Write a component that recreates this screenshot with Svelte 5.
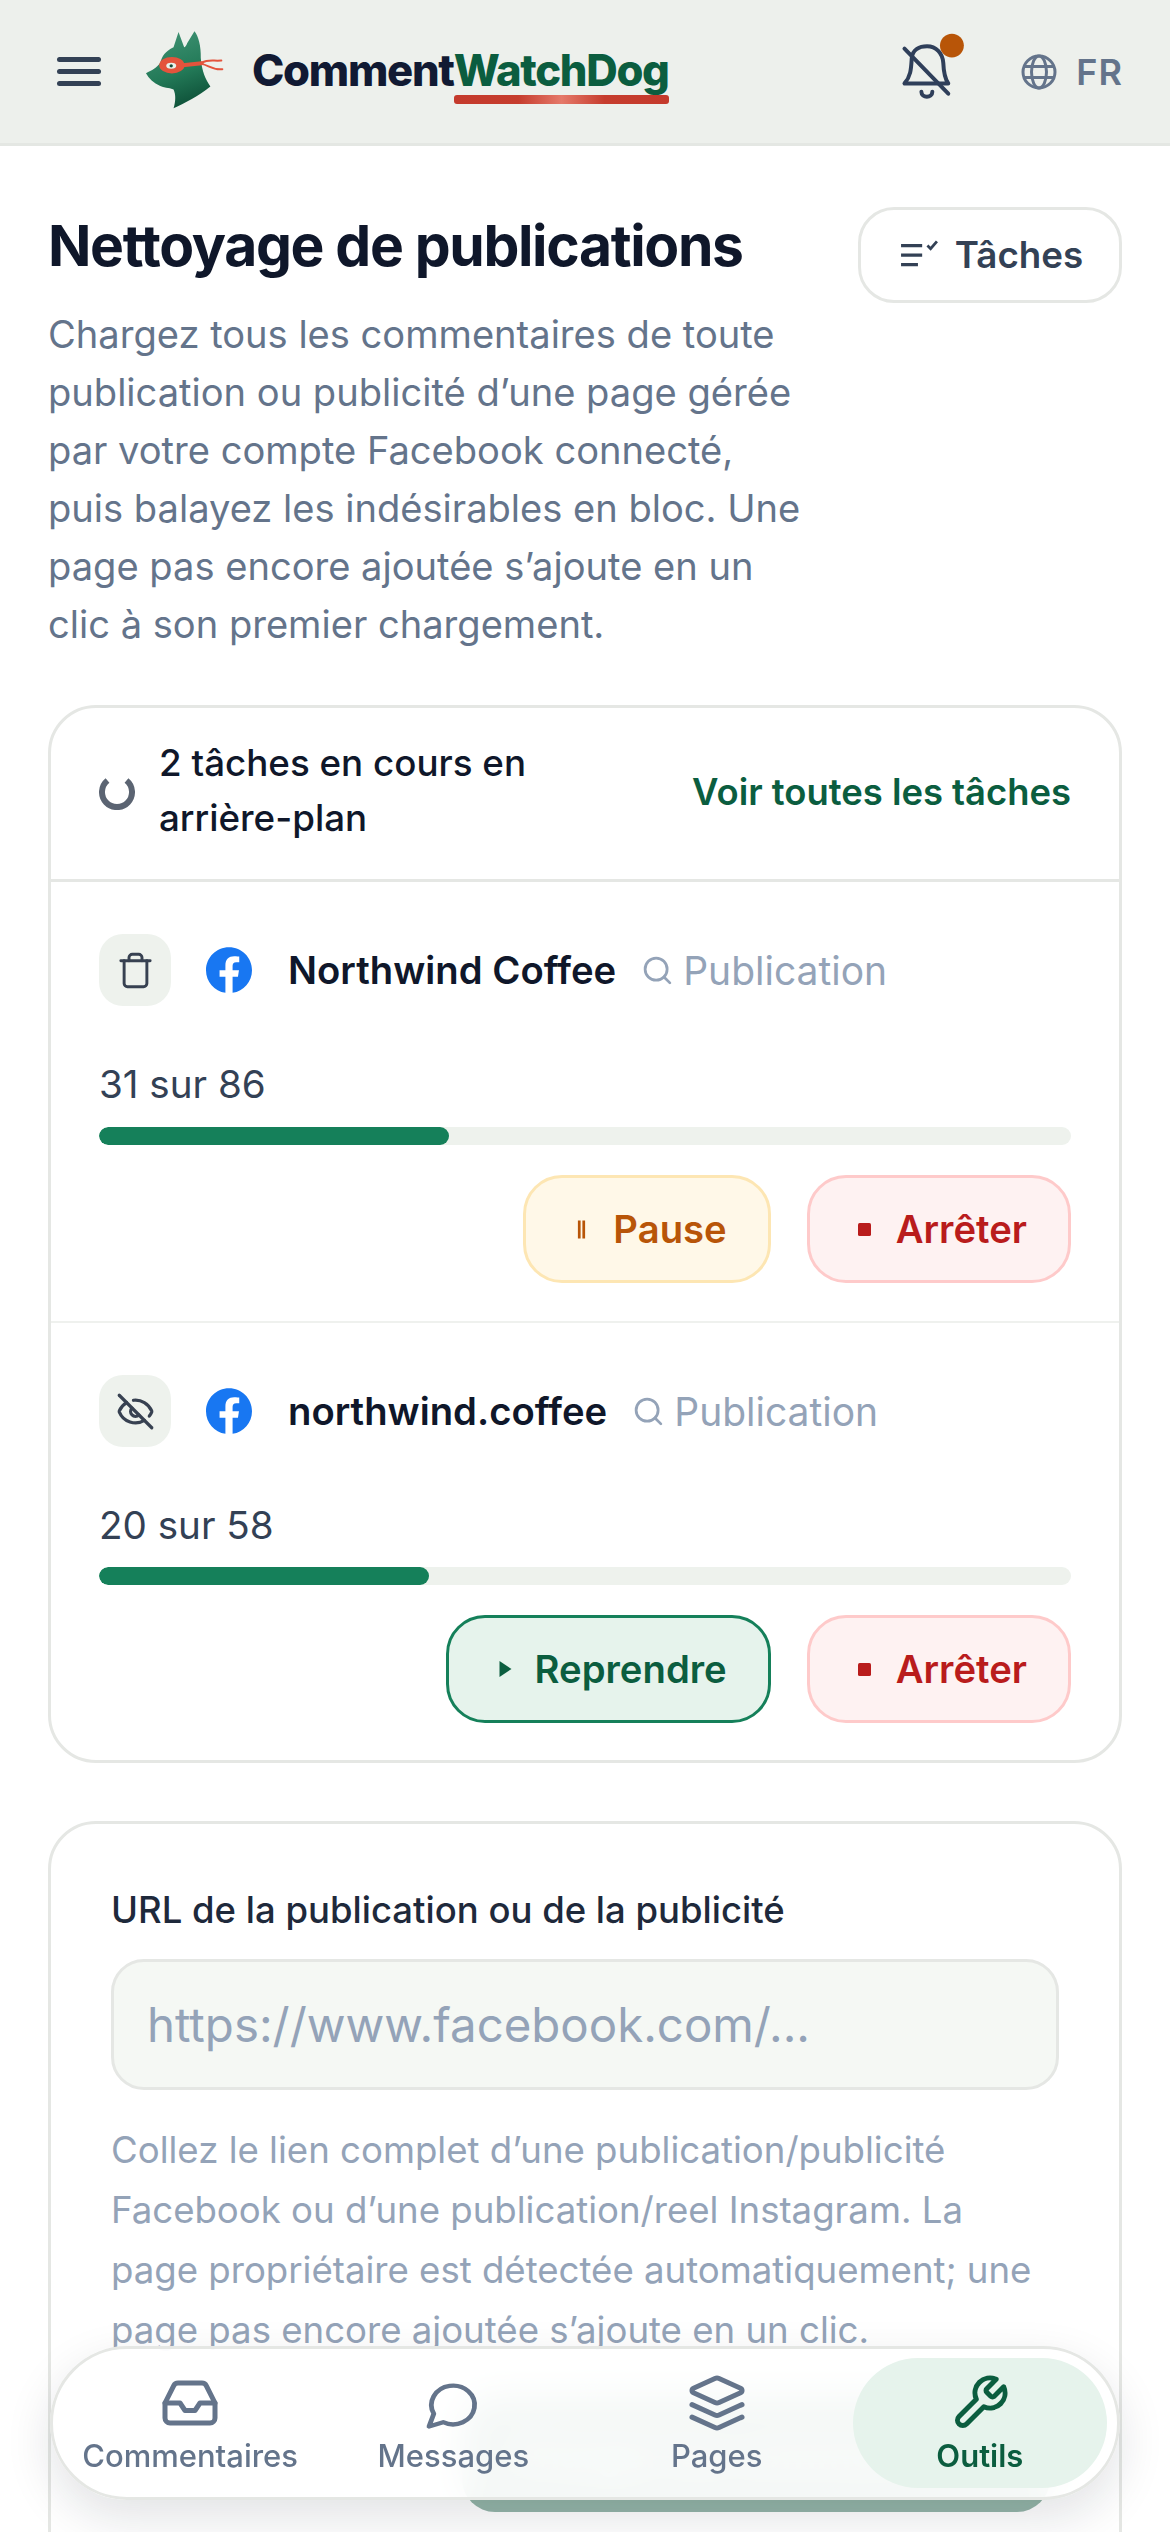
<script>
  const tasks = [
    { name: 'Northwind Coffee', icon: 'trash', count: '31 sur 86', pct: 36, paused: false },
    { name: 'northwind.coffee', icon: 'eye', count: '20 sur 58', pct: 34, paused: true }
  ];
</script>

<div class="page">
  <header class="top">
    <button class="burger" aria-label="Menu"><span></span><span></span><span></span></button>
    <svg class="dog" viewBox="70 60 250 250" aria-hidden="true">
      <defs>
        <linearGradient id="dogfill" x1="0.3" y1="0" x2="0.6" y2="1">
          <stop offset="0" stop-color="#3f9273" />
          <stop offset="0.55" stop-color="#237a58" />
          <stop offset="1" stop-color="#0d4f37" />
        </linearGradient>
      </defs>
      <path fill="url(#dogfill)" d="M180 72 L197 118 C200 118 204 112 206 106 L228 70 C240 85 248 115 247 150 C250 190 262 215 276 236 C240 265 200 285 165 302 C172 280 172 260 165 245 C150 240 135 240 125 235 C105 225 90 212 82 196 C100 188 115 180 125 165 C130 145 140 130 165 118 Z" />
      <ellipse cx="160" cy="172" rx="38" ry="25" fill="#e4533c" />
      <g fill="none" stroke="#e4533c" stroke-linecap="round">
        <path d="M192 172 L250 166" stroke-width="12" />
        <path d="M250 164 C270 154 285 160 309 158" stroke-width="6" />
        <path d="M250 168 C270 172 285 188 312 184" stroke-width="6" />
      </g>
      <ellipse cx="158" cy="174" rx="15" ry="9" fill="#e8f2ec" />
      <circle cx="158" cy="174" r="5" fill="#174a37" />
    </svg>
    <div class="brand"><span class="b1">Comment</span><span class="b2">WatchDog</span></div>
    <div class="spacer"></div>
    <svg class="bell" viewBox="120 75 195 205" aria-hidden="true">
      <g fill="none" stroke="#2f3f5a" stroke-width="12" stroke-linecap="round" stroke-linejoin="round">
        <path d="M130 227 H262 C250 210 248 190 247 165 C245 135 225 115 198 115 C175 115 155 125 152 150 C150 180 150 205 130 227 Z" />
        <path d="M130 122 L262 258" />
        <path d="M181 252 C181 272 214 272 214 252" />
      </g>
      <circle cx="273" cy="113" r="36" fill="#b85508" />
    </svg>
    <div class="lang">
      <svg class="globe" viewBox="0 0 36 36" aria-hidden="true">
        <g fill="none" stroke="#64748b" stroke-width="3">
          <circle cx="18" cy="18" r="16" />
          <ellipse cx="18" cy="18" rx="7.5" ry="16" />
          <path d="M3.5 12.5 H32.5 M3.5 23.5 H32.5" />
        </g>
      </svg>
      <span>FR</span>
    </div>
  </header>

  <main class="main">
    <section class="intro">
      <div class="intro-text">
        <h1>Nettoyage de publications</h1>
        <p>Chargez tous les commentaires de toute publication ou publicité d’une page gérée par votre compte Facebook connecté, puis balayez les indésirables en bloc. Une page pas encore ajoutée s’ajoute en un clic à son premier chargement.</p>
      </div>
      <button class="tasks-btn">
        <svg viewBox="0 0 36 28" aria-hidden="true">
          <g fill="none" stroke="#334155" stroke-width="3">
            <path d="M1 6 H21 M1 15 H21 M1 24 H17" />
            <path d="M26 6 L29 9 L35 2" stroke-width="2.6" />
          </g>
        </svg>
        Tâches
      </button>
    </section>

    <section class="card jobs">
      <div class="jobs-head">
        <svg class="spin" viewBox="0 0 36 36" aria-hidden="true">
          <path d="M8.5 6.5 A15 15 0 1 0 27.5 6.5" fill="none" stroke="#5b6472" stroke-width="6" />
        </svg>
        <div class="jobs-title">2 tâches en cours en arrière-plan</div>
        <div class="jobs-link">Voir toutes les tâches</div>
      </div>

      {#each tasks as t}
        <div class="task">
          <div class="task-row">
            <div class="task-icon">
              {#if t.icon === 'trash'}
                <svg viewBox="0 0 24 24" aria-hidden="true"><g fill="none" stroke="#374151" stroke-width="1.8" stroke-linecap="round" stroke-linejoin="round"><path d="M3 6h18" /><path d="M19 6v14c0 1-1 2-2 2H7c-1 0-2-1-2-2V6" /><path d="M8 6V4c0-1 1-2 2-2h4c1 0 2 1 2 2v2" /></g></svg>
              {:else}
                <svg viewBox="0 0 24 24" aria-hidden="true"><g fill="none" stroke="#374151" stroke-width="2" stroke-linecap="round" stroke-linejoin="round"><path d="M10.733 5.076a10.744 10.744 0 0 1 11.205 6.575 1 1 0 0 1 0 .696 10.747 10.747 0 0 1-1.444 2.49" /><path d="M14.084 14.158a3 3 0 0 1-4.242-4.242" /><path d="M17.479 17.499a10.75 10.75 0 0 1-15.417-5.151 1 1 0 0 1 0-.696 10.75 10.75 0 0 1 4.446-5.143" /><path d="m2 2 20 20" /></g></svg>
              {/if}
            </div>
            <svg class="fb" viewBox="0 0 24 24" aria-hidden="true">
              <circle cx="12" cy="12" r="11" fill="#fff" />
              <path fill="#1877f2" d="M24 12.073c0-6.627-5.373-12-12-12s-12 5.373-12 12c0 5.99 4.388 10.954 10.125 11.854v-8.385H7.078v-3.47h3.047V9.43c0-3.007 1.792-4.669 4.533-4.669 1.312 0 2.686.235 2.686.235v2.953H15.83c-1.491 0-1.956.925-1.956 1.874v2.25h3.328l-.532 3.47h-2.796v8.385C19.612 23.027 24 18.062 24 12.073z" />
            </svg>
            <span class="task-name">{t.name}</span>
            <svg class="search" viewBox="0 0 24 24" aria-hidden="true"><g fill="none" stroke="#94a3b8" stroke-width="2" stroke-linecap="round"><circle cx="11" cy="11" r="8" /><path d="m21 21-4.3-4.3" /></g></svg>
            <span class="task-kind">Publication</span>
          </div>
          <div class="task-count">{t.count}</div>
          <div class="bar"><div class="fill" style="width: {t.pct}%"></div></div>
          <div class="actions">
            {#if t.paused}
              <button class="act resume"><svg viewBox="0 0 12 16" aria-hidden="true"><path d="M0 0 L12 8 L0 16 Z" fill="#0b5d3f" /></svg>Reprendre</button>
            {:else}
              <button class="act pause"><svg viewBox="0 0 10 20" aria-hidden="true"><path d="M1 0 H4 V20 H1 Z M6 0 H9 V20 H6 Z" fill="#b85508" /></svg>Pause</button>
            {/if}
            <button class="act stop"><svg viewBox="0 0 12 12" aria-hidden="true"><rect width="12" height="12" rx="1.5" fill="#b91c1c" /></svg>Arrêter</button>
          </div>
        </div>
      {/each}
    </section>

    <section class="card form">
      <div class="label">URL de la publication ou de la publicité</div>
      <div class="input">https://www.facebook.com/...</div>
      <p class="hint">Collez le lien complet d’une publication/publicité Facebook ou d’une publication/reel Instagram. La page propriétaire est détectée automatiquement; une page pas encore ajoutée s’ajoute en un clic.</p>
      <div class="submit-row"><button class="submit">Charger les commentaires</button></div>
    </section>
  </main>

  <nav class="nav">
    <div class="nav-item">
      <svg viewBox="0 0 24 24" aria-hidden="true"><path d="M22 12h-6l-2 3h-4l-2-3H2" /><path d="M5.45 5.11 2 12v6a2 2 0 0 0 2 2h16a2 2 0 0 0 2-2v-6l-3.45-6.89A2 2 0 0 0 16.76 4H7.24a2 2 0 0 0-1.79 1.11z" /></svg>
      <span>Commentaires</span>
    </div>
    <div class="nav-item">
      <svg class="chat" viewBox="0 0 24 24" aria-hidden="true"><path d="M7.9 20A9 9 0 1 0 4 16.1L2 22Z" /></svg>
      <span>Messages</span>
    </div>
    <div class="nav-item">
      <svg viewBox="0 0 24 24" aria-hidden="true"><path d="m12.83 2.18a2 2 0 0 0-1.66 0L2.6 6.08a1 1 0 0 0 0 1.83l8.58 3.91a2 2 0 0 0 1.66 0l8.58-3.9a1 1 0 0 0 0-1.83Z" /><path d="m22 17.65-9.17 4.16a2 2 0 0 1-1.66 0L2 17.65" /><path d="m22 12.65-9.17 4.16a2 2 0 0 1-1.66 0L2 12.65" /></svg>
      <span>Pages</span>
    </div>
    <div class="nav-item on">
      <svg viewBox="0 0 24 24" aria-hidden="true"><path d="M14.7 6.3a1 1 0 0 0 0 1.4l1.6 1.6a1 1 0 0 0 1.4 0l3.77-3.77a6 6 0 0 1-7.94 7.94l-6.91 6.91a2.12 2.12 0 0 1-3-3l6.91-6.91a6 6 0 0 1 7.94-7.94l-3.76 3.76z" /></svg>
      <span>Outils</span>
    </div>
  </nav>
</div>

<style>
  :global(body) { margin: 0; background: #fff; }
  .page {
    width: 1170px;
    height: 2532px;
    overflow: hidden;
    position: relative;
    font-family: Inter, "Noto Sans", sans-serif;
    color: #0f172a;
  }
  button { font-family: inherit; }

  .top {
    height: 146px;
    box-sizing: border-box;
    background: #edf0ec;
    border-bottom: 3px solid #e4e7e3;
    display: flex;
    align-items: center;
    padding: 0 47px 0 57px;
  }
  .burger {
    width: 44px;
    padding: 0;
    border: 0;
    background: none;
    display: flex;
    flex-direction: column;
    gap: 7px;
    margin-right: 41px;
  }
  .burger span { display: block; height: 5px; border-radius: 3px; background: #334155; }
  .dog { width: 83px; height: 83px; margin-right: 27px; margin-top: -4px; }
  .brand {
    font-size: 43.6px;
    font-weight: 800;
    letter-spacing: -1.3px;
    line-height: 1;
    margin-top: -2px;
    display: flex;
  }
  .b1 { color: #111a33; }
  .b2 {
    color: #0b5d3f;
    position: relative;
  }
  .b2::after {
    content: "";
    position: absolute;
    left: 0;
    right: 0;
    bottom: -12px;
    height: 9px;
    border-radius: 3px;
    background: linear-gradient(90deg, #c43a2c, #c63d2e 30%, #e5796a 50%, #c63d2e 70%, #c43a2c);
  }
  .spacer { flex: 1; }
  .bell { width: 65px; height: 68px; margin-right: 55px; margin-top: -10px; }
  .lang {
    display: flex;
    align-items: center;
    gap: 19px;
    font-size: 36px;
    font-weight: 600;
    color: #64748b;
    letter-spacing: 1px;
  }
  .globe { width: 36px; height: 36px; }

  .main { padding: 61px 48px 0; }
  .intro { display: flex; align-items: flex-start; gap: 48px; }
  .intro-text { flex: 1; min-width: 0; }
  h1 {
    margin: -3px 0 17px;
    font-size: 57px;
    line-height: 84px;
    font-weight: 700;
    letter-spacing: -1.35px;
    white-space: nowrap;
  }
  .intro p {
    margin: 0 0 1px;
    font-size: 38.1px;
    line-height: 58px;
    color: #64748b;
  }
  .tasks-btn {
    flex: none;
    width: 264px;
    height: 96px;
    box-sizing: border-box;
    border: 3px solid #e5e7e4;
    border-radius: 36px;
    background: #fff;
    color: #334155;
    font-size: 36.75px;
    font-weight: 600;
    display: flex;
    align-items: center;
    justify-content: center;
    gap: 17px;
    padding: 0 0 2px 3px;
  }
  .tasks-btn svg { width: 38px; height: 30px; }

  .card {
    border: 3px solid #e5e7e4;
    border-radius: 48px;
    background: #fff;
  }
  .jobs { margin-top: 51px; }
  .jobs-head {
    display: flex;
    align-items: center;
    padding: 29px 48px 32px;
    border-bottom: 3px solid #e5e7e4;
  }
  .spin { width: 36px; height: 36px; flex: none; margin-right: 24px; }
  .jobs-title {
    width: 420px;
    font-size: 36.75px;
    line-height: 55px;
    font-weight: 500;
    margin-top: -2px;
    margin-bottom: 2px;
  }
  .jobs-link {
    margin-left: auto;
    font-size: 36.4px;
    font-weight: 600;
    color: #0b5d3f;
    white-space: nowrap;
  }
  .task { padding: 52px 48px 38px; }
  .task + .task { border-top: 2px solid #eff1ee; padding-bottom: 37px; }
  .task-row { display: flex; align-items: center; height: 72px; }
  .task-icon {
    width: 72px;
    height: 72px;
    border-radius: 24px;
    background: #eef2ed;
    display: flex;
    align-items: center;
    justify-content: center;
    margin-right: 35px;
  }
  .task-icon svg { width: 39px; height: 39px; }
  .fb { width: 46px; height: 46px; margin-right: 36px; }
  .task-name { font-size: 38.25px; font-weight: 600; white-space: nowrap; margin-right: 25px; }
  .search { width: 33px; height: 33px; margin-right: 9px; }
  .task-kind { font-size: 39px; color: #94a3b8; }
  .task-count { margin-top: 51px; font-size: 38.6px; line-height: 54px; color: #334155; }
  .bar { margin-top: 16px; height: 18px; border-radius: 9px; background: #eef2ed; overflow: hidden; }
  .task + .task .bar { margin-top: 15px; }
  .fill { height: 100%; border-radius: 9px; background: #15805a; }
  .actions { margin-top: 30px; display: flex; justify-content: flex-end; gap: 36px; }
  .act {
    height: 108px;
    box-sizing: border-box;
    padding: 0 41px 0 48px;
    border-radius: 39px;
    font-size: 38.25px;
    font-weight: 600;
    display: flex;
    align-items: center;
    gap: 25px;
    border: 3px solid;
  }
  .act svg { flex: none; }
  .pause { background: #fff8e8; border-color: #fde6b3; color: #b85508; padding: 0 41px 0 51px; gap: 27px; }
  .pause svg { width: 9px; height: 21px; }
  .stop { background: #fef2f2; border-color: #fecaca; color: #b91c1c; }
  .stop svg { width: 13px; height: 13px; }
  .resume { background: #e6f3ec; border-color: #15805a; color: #0b5d3f; padding: 0 41px 0 50px; gap: 23px; }
  .resume svg { width: 13px; height: 16px; }

  .form { margin-top: 58px; padding: 59px 60px 60px; height: 900px; box-sizing: border-box; }
  .label { font-size: 36.5px; line-height: 54px; font-weight: 500; color: #1e293b; }
  .input {
    margin-top: 22px;
    height: 131px;
    box-sizing: border-box;
    padding: 0 33px;
    display: flex;
    align-items: center;
    background: #f5f8f4;
    border: 3px solid #e5e7e4;
    border-radius: 33px;
    font-size: 47.4px;
    color: #94a3b8;
  }
  .hint { margin: 30px 0 0; font-size: 36.6px; line-height: 60px; color: #94a3b8; }
  .submit-row { display: flex; justify-content: flex-end; margin-top: 35px; padding-right: 9px; }
  .submit {
    width: 588px;
    height: 117px;
    border: 0;
    border-radius: 33px;
    background: #94b5a8;
    color: #fff;
    font-size: 39px;
    font-weight: 600;
  }

  .nav {
    position: fixed;
    left: 50px;
    top: 2346px;
    width: 1070px;
    height: 154px;
    box-sizing: border-box;
    border: 3px solid #e5e7e4;
    border-radius: 77px;
    background: rgba(255, 255, 255, 0.9);
    backdrop-filter: blur(18px);
    box-shadow: 0 18px 48px rgba(15, 23, 42, 0.12);
    display: grid;
    grid-template-columns: repeat(4, 1fr);
    gap: 9px;
    padding: 9px 10px;
  }
  .nav-item {
    display: flex;
    flex-direction: column;
    align-items: center;
    justify-content: center;
    gap: 4px;
    color: #64748b;
    font-size: 31px;
    font-weight: 500;
    border-radius: 66px;
  }
  .nav-item svg {
    width: 60px;
    height: 60px;
    fill: none;
    stroke: currentColor;
    stroke-width: 2;
    stroke-linecap: round;
    stroke-linejoin: round;
  }
  .nav-item svg.chat { transform: translateY(2px) scale(0.96, 0.86); }
  .nav-item.on { background: #e6f3ec; color: #0b5d3f; font-weight: 600; }
</style>
